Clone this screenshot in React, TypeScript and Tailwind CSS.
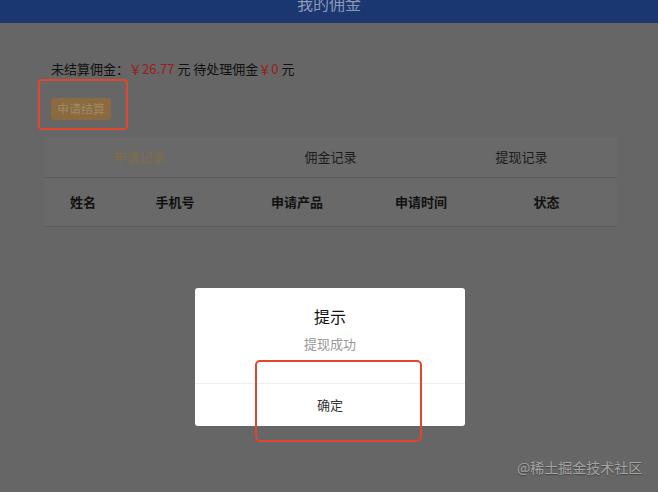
const font = { fontFamily: '"Noto Sans CJK SC", "Noto Sans", sans-serif' };

export default function App() {
  return (
    <div className="relative w-[658px] h-[492px] overflow-hidden bg-[#666666]" style={font}>
      {/* header, dimmed by the dialog mask */}
      <div className="h-[23px] bg-[#1b3772] overflow-hidden flex justify-center">
        <div className="mt-[-9px] text-[16px] leading-[24px] text-[#8d98b3]">我的佣金</div>
      </div>

      <div className="px-[51px] pt-[35px]">
        <p className="text-[13px] leading-[22px] text-[#111]">
          未结算佣金：<span className="text-[#9c1b1b]">￥26.77</span> 元 待处理佣金
          <span className="text-[#9c1b1b]">￥0</span> 元
        </p>
        <button className="mt-[18px] w-[60px] h-[22px] rounded-[3px] bg-[#8a6a3e] text-[12px] text-[#9e8866]">
          申请结算
        </button>
      </div>

      <div className="mx-[44px] mt-[17px] w-[573px] bg-[#696969]">
        <div className="grid grid-cols-3 h-[41px] items-center border-b border-[#5c5c5c] text-[13px]">
          <div className="text-center text-[#806c48]">申请记录</div>
          <div className="text-center text-[#1c1c1c]">佣金记录</div>
          <div className="text-center text-[#1c1c1c]">提现记录</div>
        </div>
        <div className="grid grid-cols-[78px_106px_138px_110px_141px] h-[49px] items-center border-b border-[#5c5c5c] text-[13px] font-bold text-[#111]">
          <div className="text-center">姓名</div>
          <div className="text-center">手机号</div>
          <div className="text-center">申请产品</div>
          <div className="text-center">申请时间</div>
          <div className="text-center">状态</div>
        </div>
      </div>

      {/* annotation around the button */}
      <div className="absolute left-[38px] top-[79px] w-[90px] h-[51px] rounded-[4px] border-2 border-[#e0462c]" />

      {/* dialog */}
      <div className="absolute left-[195px] top-[288px] w-[270px] h-[138px] rounded-[3px] bg-white flex flex-col">
        <div className="pt-[16px] text-center text-[16px] leading-[24px] text-[#111]">提示</div>
        <div className="mt-[6px] text-center text-[13px] leading-[20px] text-[#999]">提现成功</div>
        <div className="mt-[29px] border-t border-[#eeeeee] flex-1 flex items-center justify-center text-[13px] text-[#333]">
          确定
        </div>
      </div>

      {/* annotation around the confirm button */}
      <div className="absolute left-[255px] top-[360px] w-[167px] h-[82px] rounded-[5px] border-2 border-[#e0462c]" />

      <div className="absolute left-[517px] top-[457px] text-[14px] leading-[20px] text-[#a3a3a3] [text-shadow:0_1px_1px_#444]">
        @稀土掘金技术社区
      </div>
    </div>
  );
}
